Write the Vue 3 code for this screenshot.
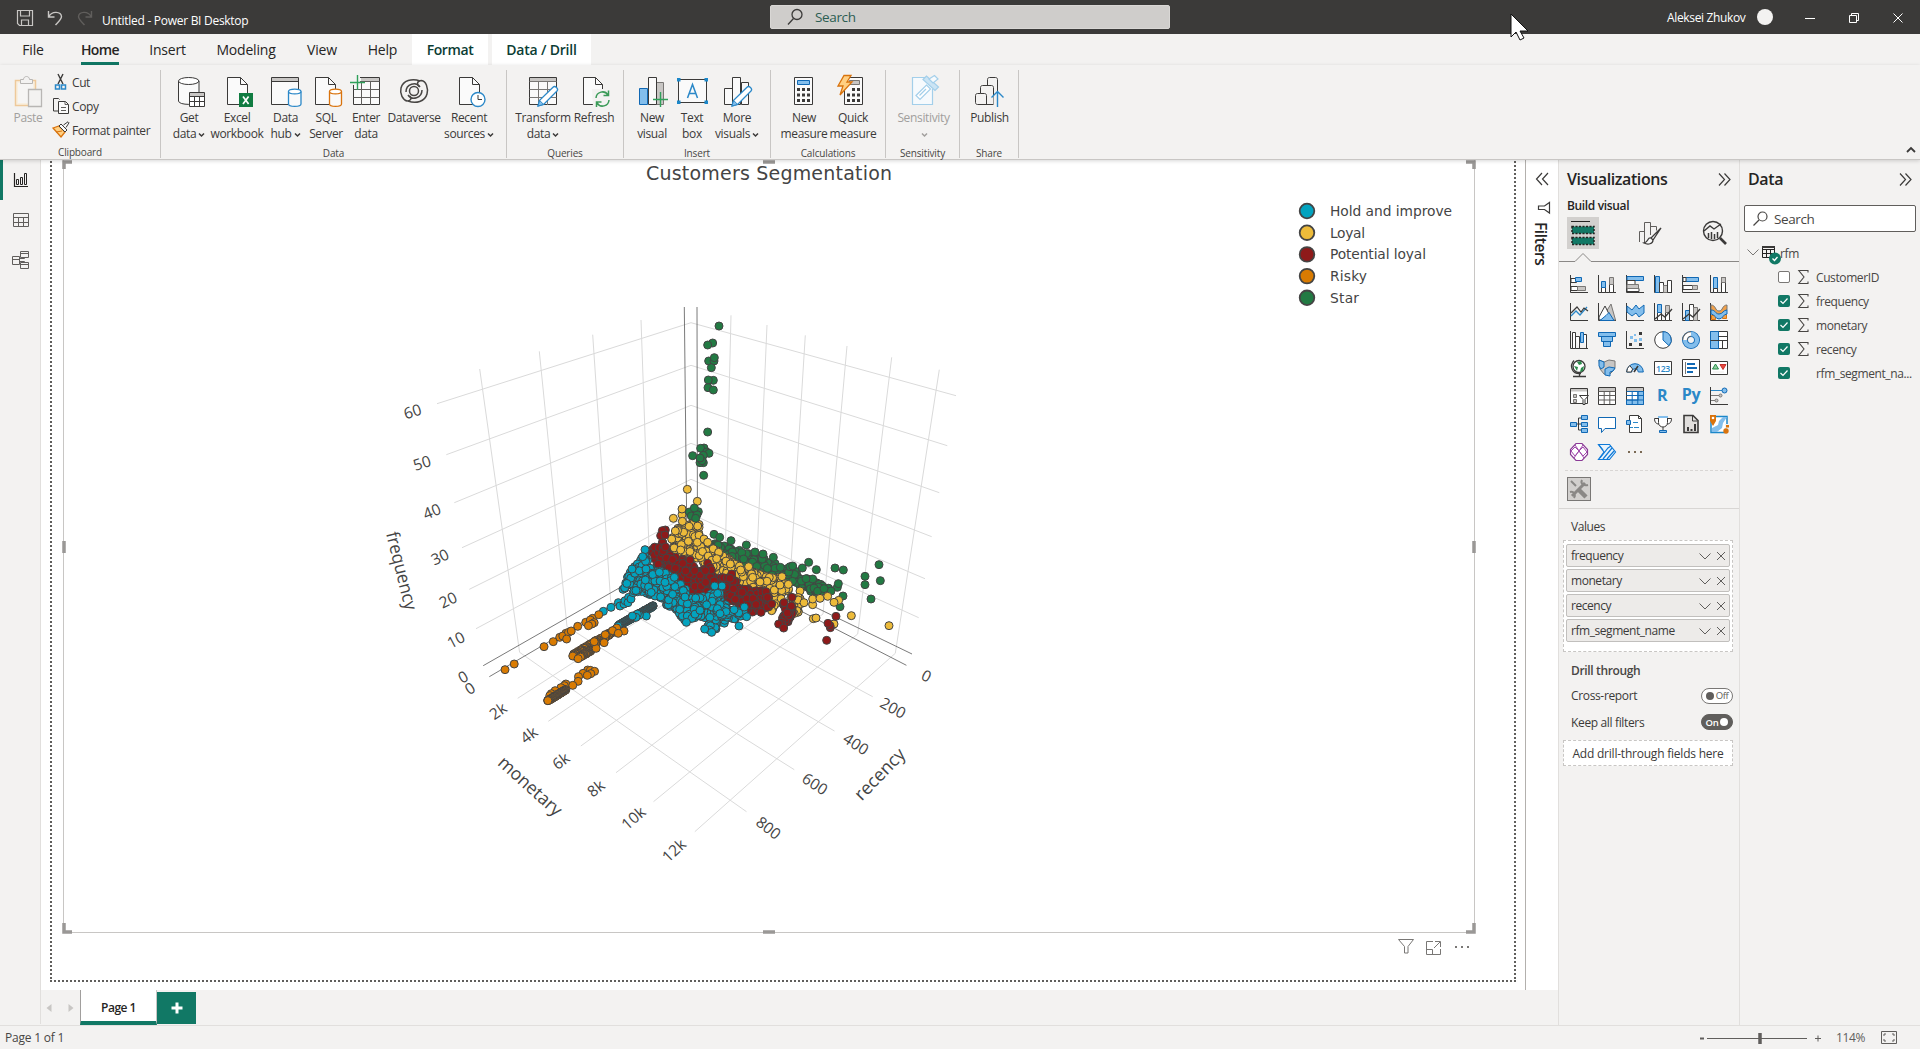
<script setup>
const K = '#3b3a39'
const B = '#2b88c8'
const docPath = (x, w = 20) =>
  `<path d="M${x}.5 2.5h${w - 8}l7 7v20h-${w - 1}z" fill="#fafafa" stroke="${K}"/><path d="M${x + w - 8}.5 2.5v7h7" fill="none" stroke="${K}"/>`
const cyl = (x, y, w, h, c) =>
  `<path d="M${x} ${y + 2.5}v${h - 5}c0 3.2 ${w} 3.2 ${w} 0v-${h - 5}" fill="#fafafa" stroke="${c}" stroke-width="1.3"/><ellipse cx="${x + w / 2}" cy="${y + 2.5}" rx="${w / 2}" ry="2.4" fill="#fff" stroke="${c}" stroke-width="1.3"/>`
const pencil = '<path d="M11 31l1.6-5.6L26 12.2c2-2 6 1.600 4 3.800L16.600 29.400z" fill="#fff" stroke="#2b88c8" stroke-width="1.3"/><path d="M11 31l1.600-5.600 4 4z" fill="#83beec" stroke="#2b88c8"/>'

const ribbonIcons = {
  get: `<path d="M5.500 6v20c0 4.500 20.500 4.500 20.500 0V6" fill="#fafafa" stroke="${K}"/><ellipse cx="15.700" cy="6" rx="10.200" ry="3.500" fill="#fff" stroke="${K}"/><path d="M16.500 17.500h15v14h-15z" fill="#fff" stroke="${K}"/><path d="M17 18h14v3H17z" fill="#c8c6c4"/><path d="M16.500 21.500h15M16.500 26.500h15M21.500 21.500v10M26.500 21.500v10" stroke="${K}" fill="none"/>`,
  excel: docPath(6, 21) + `<path d="M18 18h14v14H18z" fill="#107c41"/><path d="M22 21.500l5.600 7.500M27.600 21.500L22 29" stroke="#fff" stroke-width="1.700"/>`,
  hub: `<path d="M2.500 2.500h27v27h-27z" fill="#fafafa" stroke="${K}"/><path d="M3 3h26v3.500H3z" fill="#c8c6c4"/><path d="M2.500 6.500h27" stroke="${K}"/>` + cyl(19.500, 14, 12.500, 17.500, B),
  sql: docPath(5, 21) + cyl(19.500, 14, 12, 17.500, '#d9730d'),
  enter: `<path d="M3.500 2.500h26v27h-26z" fill="#fafafa" stroke="${K}"/><path d="M11 3h18v3.500H11z" fill="#c8c6c4"/><path d="M3.500 6.500h26M3.500 14.500h26M3.500 22.500h26M11.500 6v24M20.500 6v24" fill="none" stroke="#605e5c"/><path d="M0 0h10v10H0z" fill="#f3f2f1"/><path d="M7.500 0v15M0 7.500h15" stroke="#2fa05a" stroke-width="1.400"/>`,
  dataverse: `<g fill="none" stroke="#484644" stroke-width="1.500"><path d="M22 6c-8-3-17-.5-19 7-1.500 6 2 12 6 13 4 0 5-3 3-5"/><path d="M10 26c8 3 17 .5 19-7 1.500-6-1-13-5.500-13.500-4.500 0-5 4-2.500 6"/><circle cx="16" cy="16" r="4.500"/><path d="M8 17c0-8 10-11 14-5M24 15c0 8-10 11-14 5"/></g>`,
  recent: docPath(6, 21) + `<circle cx="25" cy="24.500" r="7" fill="#fff" stroke="${B}" stroke-width="1.400"/><path d="M25 20v4.500h4" fill="none" stroke="${K}"/>`,
  transform: `<path d="M2.500 2.500h27v27h-27z" fill="#fafafa" stroke="${K}"/><path d="M3 3h26v3.500H3z" fill="#c8c6c4"/><path d="M2.500 6.500h27M2.500 14.500h27M2.500 22.500h27M11.500 6v24M20.500 6v24" fill="none" stroke="#797775"/>` + pencil,
  refresh: docPath(5, 20) + `<path d="M14 14h18v18H15z" fill="#f3f2f1"/><path d="M18 23a6.500 6.500 0 0112-3M31 25a6.500 6.500 0 01-12 3M30.500 15.500v5h-5M18.500 32v-5h5" fill="none" stroke="#3a9a57" stroke-width="1.500"/>`,
  visual: `<path d="M3.500 13.500h8v16h-8z" fill="#83beec" stroke="#1068b4"/><path d="M20.500 7.500h7v22h-7z" fill="#c8c6c4" stroke="#797775"/><path d="M12.500 2.500h8v27h-8z" fill="#fafafa" stroke="${K}"/><path d="M24.500 17v15M17 24.500h15" stroke="#2fa05a" stroke-width="1.400"/>`,
  text: `<path d="M2.500 4.500h28v23h-28z" fill="#fafafa" stroke="${K}"/><path d="M1 3h3.500v3.500H1zM28.500 3H32v3.500h-3.500zM1 25.500h3.500V29H1zM28.500 25.500H32V29h-3.500z" fill="#1b87c9"/><path d="M11.500 23L16.500 9.500 21.500 23M13.200 18.500h6.600" fill="none" stroke="${B}" stroke-width="1.500"/>`,
  more: `<path d="M3.500 13.500h8v16h-8zM20.500 7.500h7v22h-7zM11.500 2.500h8v27h-8z" fill="#fafafa" stroke="${K}"/>` + pencil,
  calc: `<path d="M6.500 2.500h18v27h-18z" fill="#fafafa" stroke="${K}"/><path d="M9.500 5.500h12v4h-12z" fill="#83beec" stroke="#1068b4"/><path d="M9 13h3v3H9zM14 13h3v3h-3zM19 13h3v3h-3zM9 18.500h3v3H9zM14 18.500h3v3h-3zM19 18.500h3v3h-3zM9 24h3v3H9zM14 24h3v3h-3zM19 24h3v3h-3z" fill="${K}"/>`,
  quick: `<path d="M7.500 2.500h18v27h-18z" fill="#fafafa" stroke="${K}"/><path d="M12.500 5.500h10v4h-10z" fill="#c8c6c4" stroke="#797775"/><path d="M10 18.500h3v3h-3zM15 13h3v3h-3zM20 13h3v3h-3zM15 18.500h3v3h-3zM20 18.500h3v3h-3zM10 24h3v3h-3zM15 24h3v3h-3zM20 24h3v3h-3z" fill="${K}"/><path d="M7 .5h7L10 7h5L3 20l3-9H1z" fill="#ffd083" stroke="#d9730d" stroke-width="1.300"/>`,
  sens: `<g fill="none" stroke="#a3cfea" stroke-width="1.200"><path d="M18 2.500H5.500v27h20V14" fill="#f6fafd"/><path d="M9 20.500L19.500 10l4 4L13 24.500z" fill="#fff"/><path d="M12.500 20.500l6.500-6.500"/><path d="M16 4.500l3.500-3.500 12 11-3.500 3.500z" fill="#cbe4f4"/><path d="M22 4l5.500-3.500L31 4l-5 4z" fill="#f6fafd"/></g>`,
  publish: `<path d="M14.500 10.500v-6c0-1.200.8-2 2-2h6c1.200 0 2 .8 2 2v25h-20c-1.200 0-2-.8-2-2v-7c0-1.200.8-2 2-2h3v-6c0-1.200.8-2 2-2h9c1.200 0 2 .8 2 2v17M7.500 18.500h4c1.200 0 2 .8 2 2v9" fill="none" stroke="${K}"/><path d="M20.500 20h7v10h-7z" fill="#f3f2f1"/><path d="M24.500 32V16.500M18.500 22.500l6-6 6 6" fill="none" stroke="${B}" stroke-width="1.400"/>`
}

const groups = [
  { name: 'Data', w: 345, items: [
    ['get', 56, 'Get', 'data', 1], ['excel', 40, 'Excel', 'workbook'], ['hub', 57, 'Data', 'hub', 1], ['sql', 24, 'SQL', 'Server'],
    ['enter', 56, 'Enter', 'data'], ['dataverse', 40, 'Dataverse', ''], ['recent', 70, 'Recent', 'sources', 1]] },
  { name: 'Queries', w: 116, items: [['transform', 72, 'Transform', 'data', 1], ['refresh', 30, 'Refresh', '']] },
  { name: 'Insert', w: 146, items: [['visual', 56, 'New', 'visual'], ['text', 24, 'Text', 'box'], ['more', 66, 'More', 'visuals', 1]] },
  { name: 'Calculations', w: 114, items: [['calc', 66, 'New', 'measure'], ['quick', 32, 'Quick', 'measure']] },
  { name: 'Sensitivity', w: 73, items: [['sens', 75, 'Sensitivity', '', 1]], off: true },
  { name: 'Share', w: 58, items: [['publish', 59, 'Publish', '']] }
]
const tabs = [
  ['File', 66], ['Home', 68], ['Insert', 67], ['Modeling', 90], ['View', 62], ['Help', 59], ['Format', 76], ['Data / Drill', 99]
]

/* visual gallery, 18px glyphs */
const ax = `<path d="M.5 0v17.500H18" fill="none" stroke="${K}"/>`
const bl = 'fill="#83beec" stroke="#1068b4"'
const gr = 'fill="#c8c6c4" stroke="#797775"'
const wh = `fill="#fff" stroke="${K}"`
const none = 'fill="none"'
const gallery = [
  ax + `<path d="M1 3.500h5.500v4H1zM1 11.500h7.500v4H1z" ${wh}/><path d="M5.500 2.500h6v4h-6z" ${bl}/><path d="M7.500 11.500h8v4h-8z" ${gr}/>`,
  ax + `<path d="M3.500 12.500h4v5h-4zM11.500 8.500h4v9h-4z" ${wh}/><path d="M3.500 6.500h4v6h-4z" ${bl}/><path d="M11.500 2.500h4v7h-4z" ${gr}/>`,
  ax + `<path d="M1 1.500h16.500v4H1z" ${bl}/><path d="M1 5.500h8v4H1zM1 13.500h12v3H1z" ${wh}/><path d="M1 9.500h11.500v4H1z" ${gr}/>`,
  ax + `<path d="M1.500 1.500h4v16h-4z" ${bl}/><path d="M5.500 7.500h4v10h-4z" ${wh}/><path d="M9.500 10.500h4v7h-4z" ${gr}/><path d="M13.500 5.500h4v12h-4z" ${wh}/>`,
  ax + `<path d="M1 2.500h15.500v4H1z" ${bl}/><path d="M1 2.500h3v4H1zM1 10.500h10v4H1z" ${wh}/><path d="M10.500 10.500h5v4h-5z" ${gr}/>`,
  ax + `<path d="M3.500 2.500h4v15h-4z" ${bl}/><path d="M3.500 13.500h4v4h-4zM11.500 2.500h4v15h-4z" ${wh}/><path d="M11.500 2.500h4v5h-4z" ${gr}/>`,
  ax + `<path d="M1 13l5-5 4 4 7-8" ${none} stroke="#2b88c8" stroke-width="1.300"/><path d="M1 10l6-6 4 5 3-4 4 3" ${none} stroke="${K}" stroke-width="1.200"/>`,
  ax + `<path d="M8 17V9l5-8 4.500 16z" ${gr}/><path d="M1 14l6-11 6 12-2 2H1z" ${wh}/><path d="M2 17.500l6-5 3-3 5 8z" ${bl}/>`,
  ax + `<path d="M1 3l5 4 4-5 3 4 5-4v8l-5 4-3-4-4 3-5-4z" ${bl}/>`,
  ax + `<path d="M3.500 9.500h4v8h-4zM11.500 9.500h4v8h-4z" ${wh}/><path d="M3.500 1.500h4v8h-4z" ${bl}/><path d="M11.500 2.500h4v7h-4z" ${gr}/><path d="M1 16l6-5 4 3 7-8" ${none} stroke="${K}" stroke-width="1.300"/>`,
  ax + `<path d="M3.500 7.500h4v10h-4z" ${bl}/><path d="M7.500 1.500h4v16h-4z" ${wh}/><path d="M11.500 4.500h4v13h-4z" ${gr}/><path d="M1 16l6-5 4 3 7-8" ${none} stroke="${K}" stroke-width="1.300"/>`,
  ax + `<path d="M1.500 12.500h4v4h-4zM12.500 11.500h4v4h-4z" fill="#f2a14a" stroke="#d9730d"/><path d="M1 2c5 0 4 6 8 6s3-6 8-6v5c-4 0-4 8-8 8S5 8 1 8z" fill="#f2a14a" stroke="#797775"/><path d="M1 7c5 0 4 4 8 4s4-4 8-4v4c-4 0-4 5-8 5s-4-5-8-5z" ${bl}/>`,
  ax + `<path d="M2.500 1.500h3v16h-3zM5.500 5.500h4v12M12.500 3.500h4v14M9.500 8.500h3" ${wh}/><path d="M10.500 1.500h3v10h-3z" ${bl}/>`,
  `<path d="M.5 1.500h17v4H.5zM3.500 5.500h11v5h-11zM5.500 10.500h7v5h-7z" ${bl}/>`,
  ax + `<path d="M13 1h3v3h-3zM3 12h3v3H3zM13 12h3v3h-3z" fill="${K}"/><path d="M4 5h3v3H4zM8 8h3v3H8zM13 7h3v3h-3zM8 3h2v2H8z" fill="#83beec"/>`,
  `<circle cx="9" cy="9" r="8.300" ${wh}/><path d="M9 .7a8.300 8.300 0 016 14L9 9z" ${bl}/>`,
  `<circle cx="9" cy="9" r="6" fill="none" stroke="#1068b4" stroke-width="6"/><circle cx="9" cy="9" r="6" fill="none" stroke="#83beec" stroke-width="4.300"/><path d="M9 3A6 6 0 003 9" fill="none" stroke="#605e5c" stroke-width="5.500"/><path d="M9 3A6 6 0 003 9" fill="none" stroke="#fff" stroke-width="3.500"/>`,
  `<path d="M.5.5h17v17H.5z" ${wh}/><path d="M.5.5h8v17h-8z" ${bl}/><path d="M.5 9.500h17M8.500 5.500h9M12.500 9.500v8" ${none} stroke="${K}"/>`,
  `<circle cx="9" cy="7.500" r="6" fill="#fff" stroke="${K}" stroke-width="1.300"/><path d="M7 3l4-1 1 3-3 1zM4 7l4 1-1 4zM11 9l3-2-1 5-3 1z" fill="#2a8c4b"/><path d="M4 1.500C-1 7 2 15.500 11 14.500M3 17.500h13M9.500 15v2" ${none} stroke="${K}" stroke-width="1.300"/>`,
  `<path d="M1 1l5 2 5-2 6 1v7l-2 3-4 4-5-1-4-5z" fill="#c8c6c4" stroke="#797775"/><path d="M1 1l5 2v5l-3 2-2-3zM7 10l4-2 6 1-2 3-3 1v4l-5-1z" ${bl}/>`,
  `<path d="M.7 13a8.300 8.300 0 0116.600 0h-5a3.300 3.300 0 00-6.600 0z" ${bl}/><path d="M.7 13a8.300 8.300 0 013-6.400l3 3.500a4 4 0 00-1.200 2.900z" ${wh}/><path d="M8 13l4-6" stroke="${K}" stroke-width="1.600"/>`,
  `<path d="M.5 2.500h17v13H.5z" ${wh}/><text x="9" y="12.500" text-anchor="middle" font-size="9.500" font-weight="600" textLength="14" lengthAdjust="spacingAndGlyphs" font-family="Open Sans, sans-serif" fill="#2b88c8">123</text>`,
  `<path d="M.5.500h17v17H.5z" ${wh}/><path d="M3.500 3v12" stroke="#797775"/><path d="M5 4h8v2H5zM5 8h10v2H5zM5 12h6v2H5z" fill="#1068b4"/>`,
  `<path d="M.5 2.500h17v13H.5z" ${wh}/><path d="M2.500 10l3-5 3 5z" fill="#8fcf9f" stroke="#2a8c4b"/><path d="M10 5.500h6l-3 5z" fill="#e8483f" stroke="#c4302b"/><path d="M3 13h11" stroke="#edebe9"/>`,
  `<path d="M.5 1.500h17v15H.5z" ${wh}/><path d="M1 2h16v2.500H1z" fill="#c8c6c4"/><path d="M3.500 7.500h3v3h-3zM3.500 12.500h3v3h-3z" ${gr}/><path d="M9.500 8.500h9l-3.500 4v5h-2v-5z" ${wh}/>`,
  `<path d="M.5.500h17v17H.5z" ${wh}/><path d="M1 1h16v3H1z" fill="#c8c6c4"/><path d="M.5 4.500h17M.5 8.500h17M.5 13h17M6.200 4v13M11.800 4v13" ${none} stroke="#605e5c"/>`,
  `<path d="M.5.500h17v17H.5z" ${wh}/><path d="M1 1h16v3H1z" fill="#c8c6c4"/><path d="M12 4.500h5.500v13H.5V13H12z" ${bl}/><path d="M.5 4.500h17M.5 8.500h17M.5 13h17M6.200 4v13M11.800 4v13" ${none} stroke="#1068b4"/>`,
  `<text x="8" y="14" text-anchor="middle" font-size="16" font-weight="700" font-family="Open Sans, sans-serif" fill="#2b88c8">R</text>`,
  `<text x="9" y="13" text-anchor="middle" font-size="15.500" font-weight="700" textLength="18.500" lengthAdjust="spacingAndGlyphs" font-family="Open Sans, sans-serif" fill="#2b88c8">Py</text>`,
  ax + `<path d="M1 3.500h12" stroke="#2b88c8"/><circle cx="14.500" cy="3.500" r="2.500" ${bl}/><path d="M1 8.500h8M1 13.500h4" stroke="#797775"/><circle cx="10.500" cy="8.500" r="1.500" ${gr}/><circle cx="6.500" cy="13.500" r="1.500" ${gr}/>`,
  `<path d="M6 9h5M8.500 3v12M8.500 3H12M8.500 15H12" ${none} stroke="${K}"/><path d="M.5 7.500h6v4h-6zM11.500 .5h6v4h-6zM11.500 7.500h6v4h-6zM11.500 13.500h6v4h-6z" ${bl}/>`,
  `<path d="M.5 2.500h17v11H7l-3.500 4v-4h-3z" fill="#fff" stroke="#1068b4"/>`,
  `<path d="M3.500.500h9l3 3v14h-12z" ${wh}/><path d="M12.500.500v3h3" ${none} stroke="${K}"/><path d="M.5 5.500h4v4h-4z" ${bl}/><path d="M7 7.500h5M4 12.500h3M8 12.500h5" stroke="#2b88c8"/>`,
  `<path d="M4.500 1.500h9v6c0 6-9 6-9 0zM4.500 3.500h-4c0 4 2 5.500 4.500 5.500M13.500 3.500h4c0 4-2 5.500-4.500 5.500M9 12v3" ${wh}/><path d="M4 1h10v2H4z" fill="#83beec"/><path d="M5.500 15.500h7v2h-7z" ${bl}/>`,
  `<path d="M2 .500h9l5 5v12H2z" fill="#e1dfdd" stroke="${K}" stroke-width="1.600"/><path d="M5 12h2v4H5zM8.500 14h2v2h-2zM12 9h2v7h-2z" fill="${K}"/><path d="M10.500 1v5H15" ${none} stroke="${K}"/>`,
  `<path d="M1 1.500h16v16H1z" fill="#fff" stroke="#1b87c9" stroke-width="1.500"/><path d="M2 17v-4l6-3 1-4 4-4h4l-4 6-1 5-5 4z" fill="#83beec"/><path d="M0 0h6v6l-3 5-3-5z" fill="#d9730d"/><circle cx="3" cy="3" r="1.300" fill="#fff"/><path d="M15 9h4v10h-4z" fill="#f3f2f1"/><circle cx="16" cy="16" r="2.700" fill="#d9730d"/><path d="M16 10h3v2.500h-3z" fill="#d9730d"/>`,
  `<path d="M6 .5h6l5.500 6v5l-5.500 6H6l-5.500-6v-5z" fill="#fff" stroke="#8a3a96" stroke-width="1.200"/><path d="M5 2l9 13M13 2L4 15M1 8l4-4 4 4-4 5zM9 8l4-4 4 5-4 4z" ${none} stroke="#a04bab"/>`,
  `<path d="M.5 1.500h11l6 7.500-6 7.500H.5L6 9z" fill="#eaf4fc" stroke="#0f7ad8" stroke-width="1.200"/><path d="M2 15l8-10 3-2M5 16l9-11M9 16l7-8M1 2l4 5" ${none} stroke="#0f7ad8" stroke-width="1.200"/>`,
  `<path d="M2 8h2v2H2zM8 8h2v2H8zM14 8h2v2h-2z" fill="#7a6a55"/>`
]

/* 3D scatter */
const walls = [
  [437, 403.7, 691, 322.7], [446.3, 454.7, 691, 365.300], [454.3, 502.7, 691, 405.3], [462, 547.7, 691, 443.3], [469.3, 589.3, 691, 479.3], [476, 628.7, 691, 514],
  [691, 322.7, 956, 395.7], [691, 365.3, 947.3, 445.7], [691, 405.3, 939.3, 492.7], [691, 443.3, 931.7, 536.7], [691, 479.3, 925, 578.7], [691, 514, 918.7, 617.7],
  [479.7, 369, 519.6, 652.3], [539.3, 351.3, 567, 626.7], [592.7, 334.7, 610.7, 601.7], [641, 320, 650, 577],
  [731, 315.3, 725, 565], [767, 325, 756, 580], [805.3, 335.3, 789, 596], [847, 346, 823, 614], [891.7, 357.3, 857.7, 634], [939.3, 369.7, 895.3, 653.3],
  [517.7, 698.3, 725, 565], [548.3, 721.3, 756, 580], [580.8, 746, 789, 596], [616, 772.7, 823, 614], [653.5, 801.7, 857.7, 634], [694.8, 831.7, 895.3, 653.3],
  [872.7, 696.7, 650, 577], [834.5, 731, 610.7, 601.7], [794.3, 769.7, 567, 626.7], [746.5, 811.7, 519.6, 652.3]
]
const zeroLines = [
  [483.2, 665.7, 691, 547], [691, 547, 912, 654], [489.3, 676.7, 697, 555], [906.4, 665.3, 688, 553], [684.3, 307, 687, 550], [697, 307, 697.5, 550]
]
const ticks = [
  ['60', 412.5, 411.5, -18], ['50', 422, 463, -18], ['40', 432, 511.500, -22], ['30', 440, 557, -25], ['20', 448, 600, -26], ['10', 456, 640, -28],
  ['0', 463, 677, -30], ['0', 470, 688.500, -33], ['2k', 498, 711, -35], ['4k', 529, 735, -37], ['6k', 561, 761, -37], ['8k', 596, 788.5, -39], ['10k', 633.5, 818, -41], ['12k', 674, 850.5, -43],
  ['0', 926.5, 676, 26], ['200', 893, 708, 29], ['400', 856, 744, 33], ['600', 815, 784, 33], ['800', 768.5, 828, 38]
]
const axisNames = [['frequency', 400.5, 571, 76, 80], ['monetary', 529.5, 787, 42, 79], ['recency', 880.5, 775, -46, 64]]
const legend = [['Hold and improve', '#03a3bf', 122], ['Loyal', '#edbb3a', 35], ['Potential loyal', '#8e1a1a', 96], ['Risky', '#d97b02', 37], ['Star', '#227a43', 29]]

let seed = 7
const rnd = () => {
  seed = (seed * 16807) % 2147483647
  return seed / 2147483647
}
const inside = (x, y, p) => {
  let c = false
  for (let i = 0, j = p.length - 1; i < p.length; j = i++) {
    if (p[i][1] > y !== p[j][1] > y && x < ((p[j][0] - p[i][0]) * (y - p[i][1])) / (p[j][1] - p[i][1]) + p[i][0]) c = !c
  }
  return c
}
const T = (x, y) => [550 + x / 3, 480 + y / 3]
const U = (x, y) => [360 + x * 0.38265, 600 + y / 3]
const V = (x, y) => [640 + x / 3, 290 + y / 3]
const cloud = (color, poly, n) => {
  const xs = poly.map(p => p[0]), ys = poly.map(p => p[1])
  const out = []
  const x0 = Math.min(...xs), x1 = Math.max(...xs), y0 = Math.min(...ys), y1 = Math.max(...ys)
  while (out.length < n) {
    const x = x0 + rnd() * (x1 - x0), y = y0 + rnd() * (y1 - y0)
    if (inside(x, y, poly)) out.push([...T(x, y), color])
  }
  return out
}
const list = (color, f, pts) => pts.map(p => [...f(...p), color])
const tube = (color, f, a, b, n, spread) =>
  Array.from({ length: n }, (_, i) => {
    const t = 1 - i / (n - 1)
    const [x, y] = f(a[0] + (b[0] - a[0]) * t, a[1] + (b[1] - a[1]) * t)
    return [x + (rnd() - 0.5) * spread, y + (rnd() - 0.5) * spread, color]
  })
const [TEAL, GOLD, RED, ORANGE, GREEN] = legend.map(l => l[1])

const dots = [
  ...list(GREEN, V, [[237, 108], [218, 159], [203, 165], [206, 213], [222, 213], [223, 203], [214, 233], [220, 271], [205, 270], [204, 293], [220, 300], [203, 426], [192, 474], [182, 475], [200, 486], [207, 490], [158, 497], [190, 496], [190, 518], [180, 518], [186, 512], [180, 504], [191, 556]]),
  ...cloud(GREEN, [[462, 200], [500, 190], [543, 198], [600, 222], [665, 240], [690, 262], [735, 265], [745, 290], [795, 300], [830, 325], [852, 322], [845, 335], [790, 340], [735, 315], [700, 300], [640, 290], [560, 245]], 230),
  ...list(GREEN, T, [[492, 163], [509, 172], [543, 182], [589, 195], [615, 216], [639, 222], [670, 232], [691, 262], [720, 260], [728, 258], [757, 264], [776, 247], [799, 269], [788, 297], [768, 296], [855, 264], [880, 270], [945, 289], [945, 314], [991, 302], [987, 254], [963, 357], [862, 322], [865, 311], [870, 380], [879, 348], [843, 333], [822, 326]]),
  ...list(GOLD, T, [[412, 28], [442, 64], [396, 104], [396, 87], [370, 115]]),
  ...cloud(GOLD, [[388, 135], [420, 125], [447, 130], [449, 172], [480, 200], [520, 222], [560, 255], [640, 285], [695, 295], [715, 320], [718, 345], [680, 370], [665, 392], [600, 325], [520, 285], [440, 245], [372, 218], [360, 185]], 360),
  ...list(GOLD, T, [[397, 124], [376, 153], [415, 184], [442, 187], [462, 177], [473, 187], [392, 210], [506, 217], [500, 236], [541, 252], [596, 260], [572, 270], [608, 292], [696, 290], [715, 313], [690, 315], [665, 392], [750, 333]]),
  ...cloud(GOLD, [[718, 350], [750, 352], [765, 366], [750, 385], [738, 410], [722, 395]], 22),
  ...list(GOLD, T, [[762, 368], [788, 374], [788, 357], [810, 355], [833, 349], [866, 361], [852, 367], [790, 416], [798, 414], [904, 407], [1017, 437], [852, 432]]),
  ...list(GREEN, T, [[418, 96], [424, 108], [445, 95], [441, 104], [437, 115], [433, 84]]),
  ...cloud(RED, [[303, 212], [325, 190], [348, 182], [355, 225], [400, 238], [440, 265], [475, 268], [500, 292], [545, 290], [580, 325], [650, 335], [665, 375], [640, 392], [605, 402], [560, 370], [500, 350], [420, 330], [370, 285], [320, 250]], 480),
  ...list(RED, T, [[346, 150], [337, 152], [332, 167], [345, 165], [420, 240], [473, 250], [480, 262], [484, 270], [434, 272], [466, 272], [467, 307], [545, 282], [540, 295], [648, 335], [665, 372], [652, 352], [633, 397]]),
  ...cloud(RED, [[697, 368], [728, 382], [728, 400], [710, 440], [692, 436], [700, 400]], 60),
  ...list(RED, T, [[702, 368], [724, 378], [686, 432], [701, 444], [726, 352], [858, 409], [841, 443], [840, 437], [834, 430], [830, 481]]),
  ...tube(TEAL, T, [205, 437], [310, 378], 170, 0.8),
  ...list(TEAL, T, [[289, 408], [268, 405], [262, 402], [258, 412], [247, 408], [160, 394], [183, 382], [205, 368], [210, 378], [222, 372], [225, 362], [236, 352], [234, 368], [243, 357], [219, 328]]),
  ...cloud(TEAL, [[283, 218], [298, 240], [292, 262], [330, 272], [375, 292], [408, 325], [418, 350], [455, 350], [490, 338], [512, 335], [515, 360], [545, 390], [585, 392], [585, 410], [530, 425], [488, 455], [465, 445], [485, 415], [440, 412], [405, 422], [370, 385], [330, 365], [300, 345], [240, 338], [222, 325], [228, 290], [248, 268], [268, 240]], 470),
  ...list(TEAL, T, [[285, 209], [278, 230], [246, 267], [288, 267], [286, 300], [328, 277], [345, 307], [373, 292], [400, 332], [405, 351], [437, 354], [450, 391], [516, 318], [494, 318], [503, 340], [510, 401], [552, 389], [583, 381], [590, 410], [567, 438], [485, 457], [409, 427], [464, 447]]),
  ...list(ORANGE, U, [[403, 192], [379, 209], [481, 140], [505, 125], [522, 112], [538, 100], [530, 108], [545, 97], [540, 117], [552, 93], [569, 79], [590, 67], [608, 55], [602, 60], [612, 68], [606, 72], [597, 77], [624, 44]]),
  ...tube(ORANGE, U, [556, 166], [670, 90], 110, 2.2),
  ...tube(ORANGE, U, [575, 170], [605, 150], 30, 1.2),
  ...list(ORANGE, U, [[671, 84], [660, 92], [690, 93], [675, 100], [641, 104], [638, 128], [617, 145], [612, 125], [556, 168], [570, 176]]),
  ...list(ORANGE, U, [[595, 210], [602, 211], [613, 214], [603, 221], [583, 220], [571, 230], [594, 226], [570, 244], [538, 252], [534, 257], [556, 256], [525, 263], [510, 272], [500, 281], [496, 287]]),
  ...tube(ORANGE, U, [491, 302], [538, 269], 80, 0.6),
  ...list(ORANGE, U, [[491, 302]])
]

const fields = [['CustomerID', 0, 1], ['frequency', 1, 1], ['monetary', 1, 1], ['recency', 1, 1], ['rfm_segment_na...', 1, 0]]
const values = ['frequency', 'monetary', 'recency', 'rfm_segment_name']
</script>

<template>
  <div class="app">
    <header class="title">
      <svg class="ti" width="120" height="34" fill="none" stroke="#c8c6c4">
        <path d="M17.500 10.500h15v15h-13l-2-2z M20.500 11v5h9v-5M21.500 25v-5h7v5" stroke-width="1.200" />
        <path d="M48.500 11v6h6M49 16.500c3-6 12-5 12.500 0 0 3-3 5-6 8.500" stroke-width="1.400" />
        <path d="M91.500 11v6h-6M91 16.500c-3-6-12-5-12.500 0 0 3 3 5 6 8.500" stroke="#605e5c" stroke-width="1.400" />
      </svg>
      <span class="doc">Untitled - Power BI Desktop</span>
      <div class="gsearch">
        <svg width="16" height="18" fill="none" stroke="#3b3a39" stroke-width="1.300"><circle cx="10" cy="6.500" r="5" /><path d="M6.500 10.500L1 16.500" /></svg>
        <span>Search</span>
      </div>
      <span class="user">Aleksei Zhukov</span>
      <i class="avatar"></i>
      <svg class="win" width="120" height="34" fill="none" stroke="#fff">
        <path d="M9 18.500h10M53.500 15.500h7v7h-7zM55.500 15v-1.500h7v7H61M97.500 13.500l9 9M106.500 13.500l-9 9" />
      </svg>
    </header>

    <nav class="tabs">
      <span v-for="(t, i) in tabs" :key="t[0]" class="tab" :class="{ active: i === 1, ctx: i > 5 }" :style="{ width: t[1] + 'px' }"><b>{{ t[0] }}</b></span>
    </nav>

    <div class="ribbon">
      <section class="clip">
        <div class="paste">
          <svg width="32" height="32" fill="none">
            <path d="M3.500 5.500h20v25h-20z" fill="#f9efdf" stroke="#eec99a" stroke-width="1.500" /><path d="M6 8h15v20H6z" fill="#f6f5f4" />
            <path d="M8.500 8.500v-4h3c0-4 6-4 6 0h3v4z" fill="#f3f2f1" stroke="#b8b6b4" /><path d="M16.500 14.500h13v17h-13z" fill="#f3f2f1" stroke="#b8b6b4" stroke-width="1.300" />
          </svg>
          <span>Paste</span>
        </div>
        <div class="small">
          <div><svg width="18" height="18" fill="none"><path d="M6 1l5 10M11 1L6 11" stroke="#3b3a39" stroke-width="1.400" /><path d="M3.500 12h4v4h-4zM9.500 12h4v4h-4z" stroke="#2b88c8" stroke-width="1.500" /></svg>Cut</div>
          <div><svg width="18" height="18" fill="none" stroke="#3b3a39"><path d="M6 14H1.500V1.500h5l1 1" /><path d="M6.500 4.500h7l3 3v9h-10z" fill="#fafafa" /><path d="M13 4.500v3h3.500M9 10.500h5M9 13.500h5" stroke="#605e5c" /></svg>Copy</div>
          <div><svg width="18" height="18" fill="none"><path d="M1 7l6-2 6 6-4 5z" fill="#ffd083" stroke="#d9730d" stroke-width="1.300" /><path d="M7 5l2-2 6 6-2 2zM11.500 4L16 .8l1 1L14 6.500" fill="#fafafa" stroke="#3b3a39" /><path d="M4 11l6-1" stroke="#d9730d" /></svg>Format painter</div>
        </div>
        <label>Clipboard</label>
      </section>
      <section v-for="g in groups" :key="g.name" :style="{ width: g.w + 'px' }" :class="{ off: g.off }">
        <div class="btns">
          <div v-for="b in g.items" :key="b[0]" class="btn" :style="{ width: b[1] + 'px' }">
            <svg width="33" height="33" viewBox="0 0 33 33" v-html="ribbonIcons[b[0]]"></svg>
            <span>{{ b[2] }}</span>
            <span>{{ b[3] }}<svg v-if="b[4]" class="chev" width="7" height="6" fill="none" stroke="currentColor" stroke-width="1.500"><path d="M1 1.500L3.500 4 6 1.500" /></svg></span>
          </div>
        </div>
        <label>{{ g.name }}</label>
      </section>
      <svg class="collapse" width="10" height="7" fill="none" stroke="#3b3a39" stroke-width="1.800"><path d="M1 6l4-4 4 4" /></svg>
    </div>

    <main class="body">
      <div class="work">
        <div class="upper">
          <aside class="rail">
            <svg width="41" height="120" fill="none" stroke="#605e5c">
              <path d="M14.500 13v13.500H28" stroke="#252423" stroke-width="1.200" /><path d="M16.500 19.500h2v5h-2zM20.500 17.500h2v7h-2zM24.500 13.500h2v11h-2z" stroke="#252423" />
              <path d="M13.500 53.500h15v13h-15zM13.500 57.500h15M13.500 62.500h15M18.500 57v9M23.500 57v9" />
              <path d="M20.500 91.500h8v6h-8zM20.500 102.500h8v6h-8zM12.500 96.500h7v8h-7zM12.500 99.500h7M20.500 93.500h8M20.500 104.500h8M19.500 98.500h5v-1M19.500 101.500h5v1" />
            </svg>
          </aside>
          <div class="canvas">
            <div class="page">
              <svg class="chart" width="1415" height="778" viewBox="62 158 1415 778">
                <path d="M63.500 160V932.500H1474.500V160" fill="none" stroke="#c8c6c4" />
                <path d="M64 169v-7h8M1474 169v-7h-8M64 923v9h8M1474 923v9h-8M763 162h12M763 932h12M64 541v12M1474 541v12" fill="none" stroke="#9a9896" stroke-width="3.500" />
                <text class="vd" x="769" y="179.500" text-anchor="middle" font-size="19" textLength="246">Customers Segmentation</text>
                <path v-for="(l, i) in walls" :key="'w' + i" :d="`M${l[0]} ${l[1]}L${l[2]} ${l[3]}`" stroke="#dadada" fill="none" />
                <path v-for="(l, i) in zeroLines" :key="'z' + i" :d="`M${l[0]} ${l[1]}L${l[2]} ${l[3]}`" stroke="#6b6b6b" stroke-width=".9" fill="none" />
                <circle v-for="(d, i) in dots" :key="'d' + i" :cx="d[0]" :cy="d[1]" r="4" :fill="d[2]" stroke="#444" stroke-width="1" />
                <text v-for="(t, i) in ticks" :key="'t' + i" class="os" text-anchor="middle" font-size="15.500" :transform="`translate(${t[1]} ${t[2]}) rotate(${t[3]})`" y="5.500">{{ t[0] }}</text>
                <text v-for="t in axisNames" :key="t[0]" class="os" text-anchor="middle" font-size="18" :textLength="t[4]" lengthAdjust="spacingAndGlyphs" :transform="`translate(${t[1]} ${t[2]}) rotate(${t[3]})`" y="5">{{ t[0] }}</text>
                <g v-for="(l, i) in legend" :key="l[0]">
                  <circle cx="1307" :cy="211 + i * 21.700" r="7.300" :fill="l[1]" stroke="#444" stroke-width="1.800" />
                  <text class="vd" x="1330" :y="216 + i * 21.700" font-size="13.800" :textLength="l[2]">{{ l[0] }}</text>
                </g>
              </svg>
              <svg class="actions" width="76" height="20" fill="none" stroke="#797775">
                <path d="M1.500 2.500h15l-5.500 7v6.500H7.500V9.500z" /><path d="M36 4.500h-6.500v13h14V12M38 4.500h5.500V10M43 5l-6 6M29.500 12.500h6v5" /><path d="M58 9h2v2h-2zM64 9h2v2h-2zM70 9h2v2h-2z" fill="#797775" stroke="none" />
              </svg>
            </div>
          </div>
          <aside class="filters">
            <svg width="32" height="60" fill="none" stroke="#3b3a39" stroke-width="1.200"><path d="M16 13l-5.500 6 5.500 6M22 13l-5.500 6 5.500 6M23.500 42.500v10.500l-5-3.500h-6v-3.500h6z" /></svg>
            <span>Filters</span>
          </aside>
        </div>
        <footer class="pages">
          <svg width="40" height="34" fill="#c8c6c4"><path d="M10.500 14v8l-5-4zM27.500 14v8l5-4z" /></svg>
          <span class="pg">Page 1</span>
          <span class="add"><svg width="12" height="12"><path d="M6 .5v11M.5 6h11" stroke="#fff" stroke-width="3" /></svg></span>
        </footer>
      </div>

      <aside class="viz">
        <div class="head"><h2>Visualizations</h2><svg width="13" height="13" fill="none" stroke="#3b3a39" stroke-width="1.200"><path d="M1 .5l5.500 6L1 12.500M6.500.5l5.500 6-5.500 6" /></svg></div>
        <h3>Build visual</h3>
        <div class="modes">
          <span class="sel"><svg width="32" height="32"><path d="M4 4.500h19" stroke="#252423" /><path d="M5 9.500h22v7H5zM5 20.500h22v7H5z" fill="#117865" stroke="#252423" stroke-dasharray="2 1.500" stroke-width="1.500" /></svg></span>
          <svg class="m2" width="24" height="24" fill="none" stroke="#605e5c"><path d="M1.500 21V10.500h5V22M6.500 14V1.500h6V14M12.500 5.500h6v4" /><path d="M23 7L13 17l2 2zM13 17c-4-1-2 4-7 5 4 2 9 1 9-3" fill="#fafafa" stroke="#3b3a39" stroke-width="1.300" /></svg>
          <svg width="26" height="26" fill="none" stroke="#3b3a39" stroke-width="1.400"><circle cx="11" cy="11" r="9.500" /><path d="M2 11l6-5 4 3 7-5" /><path d="M6.500 18v-5M9.500 19v-7M12.500 19v-5M15.500 18v-6" stroke-width="1.500" /><path d="M18 18l6 6" stroke-width="2.600" /></svg>
        </div>
        <svg class="notch" width="180" height="10" fill="none" stroke="#8a8886"><path d="M0 9.500h16l8-8 8 8h148" /></svg>
        <div class="gallery">
          <span v-for="(g, i) in gallery" :key="i"><svg width="19" height="19" viewBox="0 0 19 19" v-html="g"></svg></span>
        </div>
        <div class="custom"><span><svg width="22" height="22" fill="none" stroke="#8a8886" stroke-width="3"><path d="M3 3l5 5" stroke-width="2" /><path d="M11 12l7 7" stroke-width="4.500" /><path d="M4 18L17 5" /><path d="M14 2c-2 4 2 6 6 5M2 14c4-1 6 3 4 6" stroke-width="2" /></svg></span></div>
        <div class="wells">
          <p>Values</p>
          <div class="well">
            <div v-for="v in values" :key="v" class="pill"><span>{{ v }}</span>
              <svg width="28" height="12" fill="none" stroke="#605e5c"><path d="M.5 3.500l5.500 5.500 5.500-5.500M18 2l8 8M26 2l-8 8" /></svg>
            </div>
          </div>
          <p class="dt">Drill through</p>
          <div class="row r1"><span>Cross-report</span><em class="tg"><i></i>Off</em></div>
          <div class="row r2"><span>Keep all filters</span><em class="tg on">On<i></i></em></div>
          <div class="drop">Add drill-through fields here</div>
        </div>
      </aside>

      <aside class="data">
        <div class="head"><h2>Data</h2><svg width="13" height="13" fill="none" stroke="#3b3a39" stroke-width="1.200"><path d="M1 .5l5.500 6L1 12.500M6.500.5l5.500 6-5.500 6" /></svg></div>
        <div class="dsearch"><svg width="15" height="15" fill="none" stroke="#484644" stroke-width="1.200"><circle cx="9.500" cy="5.500" r="4.500" /><path d="M6 9L.5 14.500" /></svg>Search</div>
        <div class="tbl">
          <svg width="33" height="24" fill="none"><path d="M.5 8.500l5.500 5.500 5.500-5.500" stroke="#797775" /><path d="M15.500 5.500h12v11h-12zM15.500 8.500h12M15.500 12.500h12M19.500 8v8M23.500 8v8" stroke="#252423" /><path d="M15 5h13v2H15z" fill="#3b3a39" /><circle cx="28" cy="17.500" r="6" fill="#117865" /><path d="M25.500 17.500l2 2 3-3.500" stroke="#fff" stroke-width="1.300" /></svg>
          <span>rfm</span>
        </div>
        <div v-for="f in fields" :key="f[0]" class="field">
          <i :class="{ ck: f[1] }"><svg v-if="f[1]" width="12" height="12" fill="none" stroke="#fff" stroke-width="1.200"><path d="M2.500 6l2.500 2.500 4.500-5" /></svg></i>
          <svg width="11" height="14" fill="none" stroke="#484644" stroke-width="1.100"><path v-if="f[2]" d="M10 2.500V.5H.8L6 7 .8 13.500H10v-2" /></svg>
          <span>{{ f[0] }}</span>
        </div>
      </aside>
    </main>

    <footer class="status">
      <span>Page 1 of 1</span>
      <svg width="130" height="24" fill="none" stroke="#605e5c"><path d="M1 12.500h4" stroke-width="2" /><path d="M8 12.500h100M116 12.500h6M119 9.500v6" /><path d="M61 7v11" stroke-width="3.500" /></svg>
      <b>114%</b>
      <svg width="17" height="14" fill="none" stroke="#605e5c"><path d="M.5.500h15v12H.5z" /><path d="M3 5V3h2M11 3h2v2M13 8v2h-2M5 10H3V8" /></svg>
    </footer>

    <svg class="cursor" width="20" height="30"><path d="M1 1v23l5-5 4 8 4-2-4-7h8z" fill="#fff" stroke="#111" /></svg>
  </div>
</template>

<style>
body { margin: 0; overflow: hidden; }
</style>

<style scoped>
* { box-sizing: border-box; }
.app { position: relative; width: 1920px; height: 1049px; display: flex; flex-direction: column; background: #f3f2f1; color: #252423; font-family: "Open Sans", "Noto Sans", sans-serif; font-size: 12px; letter-spacing: -0.35px; white-space: nowrap; overflow: hidden; }
svg { display: block; flex: none; overflow: visible; }
p, h2, h3 { margin: 0; }
.title { height: 34px; background: #3b3a39; color: #fff; display: flex; align-items: center; flex: none; }
.ti { width: 102px; }
.doc { width: 668px; padding-top: 6px; font-size: 12px; letter-spacing: -0.28px; }
.gsearch { width: 400px; height: 24px; background: #cfcdcb; border: 1px solid #d9d7d5; border-radius: 2px; display: flex; align-items: center; padding-left: 16px; gap: 12px; font-size: 13.5px; color: #2c5d52; }
.user { margin-left: 497px; width: 90px; }
.avatar { width: 16px; height: 16px; border-radius: 50%; background: #f3f2f1; }
.win { margin-left: 23px; }
.tabs { height: 31px; display: flex; flex: none; font-size: 14px; letter-spacing: -0.2px; }
.tab { display: flex; justify-content: center; padding-top: 6px; }
.tab b { font-weight: 400; height: 25px; line-height: 20px; }
.tab.active b { font-weight: 600; border-bottom: 3px solid #117865; letter-spacing: -0.6px; }
.tab.ctx { background: #fff; color: #0b3d34; }
.tab.ctx b { font-weight: 600; letter-spacing: -0.4px; }
.tab.ctx:last-child b { letter-spacing: -0.2px; }
.tab.ctx + .tab.ctx { margin-left: 4px; }
.ribbon { height: 95px; display: flex; flex: none; position: relative; z-index: 3; border-bottom: 1px solid #c8c6c4; box-shadow: 0 1px 4px rgba(0,0,0,.16); padding-top: 5px; background: #f3f2f1; color: #3b3a39; }
.ribbon section { height: 88px; border-right: 1px solid #c8c6c4; position: relative; display: flex; flex-direction: column; justify-content: space-between; flex: none; box-sizing: content-box; }
.ribbon label { display: block; text-align: center; font-size: 10px; line-height: 10px; color: #484644; letter-spacing: -0.15px; }
.btns { display: flex; padding-top: 5px; }
.btn { display: flex; flex-direction: column; align-items: center; flex: none; }
.btn > span { line-height: 16px; height: 16px; display: flex; align-items: center; }
.btn > svg { margin-bottom: 2px; }
.chev { margin: 1px 0 0 2px; }
.off .btn { color: #a19f9d; }
.ribbon .clip { width: 160px; display: grid; grid-template-columns: 52px 108px; grid-template-rows: 77px 11px; }
.clip label { grid-column: 1 / 3; }
.paste { display: flex; flex-direction: column; align-items: center; padding: 5px 0 0 4px; color: #a19f9d; gap: 2px; }
.small { padding-top: 0; }
.small div { height: 24px; display: flex; align-items: center; gap: 2px; letter-spacing: -0.4px; }
.collapse { position: absolute; right: 4px; bottom: 6px; }
.body { flex: 1; display: flex; min-height: 0; }
.work { width: 1558px; display: flex; flex-direction: column; flex: none; }
.upper { height: 830px; display: flex; }
.rail { width: 41px; border-right: 1px solid #e1dfdd; position: relative; }
.rail::before { content: ""; position: absolute; left: 0; top: 0; width: 3px; height: 40px; background: #117865; }
.canvas { width: 1484px; background: #fff; padding: 0 9px 6px 9px; overflow: hidden; }
.page { height: 824px; width: 1466px; border: 2px dotted #605e5c; border-top: 0; position: relative; padding-left: 10px; }
.chart { margin-top: -2px; }
.actions { margin: 1px 0 0 1335px; }
.vd { font-family: "DejaVu Sans", Verdana, sans-serif; fill: #444; letter-spacing: 0; }
.os { font-family: "Open Sans", sans-serif; fill: #444; letter-spacing: 0; }
.filters { width: 33px; background: #fff; border-left: 1px solid #b3b0ad; display: flex; flex-direction: column; gap: 2px; }
.filters span { writing-mode: vertical-rl; font-size: 15.500px; font-weight: 600; line-height: 34px; letter-spacing: -0.4px; }
.pages { height: 34px; display: flex; margin-left: 40px; border-left: 1px solid #e1dfdd; }
.pages > svg { width: 39px; }
.pg { width: 77px; background: #fff; border-left: 1px solid #a19f9d; border-right: 1px solid #c8c6c4; border-bottom: 4px solid #117865; text-align: center; line-height: 36px; font-weight: 600; letter-spacing: -0.5px; height: 35px; }
.add { width: 39px; height: 32px; margin-top: 2px; background: #117865; display: grid; place-items: center; }
.viz { width: 182px; flex: none; border-left: 1px solid #e1dfdd; border-right: 1px solid #e1dfdd; display: flex; flex-direction: column; }
.head { display: flex; justify-content: space-between; align-items: center; height: 38px; padding: 0 8px 0 8px; }
h2 { font-size: 16px; font-weight: 600; letter-spacing: -0.4px; }
h3 { font-size: 12px; font-weight: 600; padding-left: 8px; line-height: 16px; height: 18px; }
.modes { display: flex; height: 34px; padding-left: 8px; align-items: center; }
.sel { width: 32px; height: 32px; background: #d2d0ce; }
.m2 { margin: 0 40px 0 39px; }
.notch { margin-top: 2px; }
.gallery { display: grid; grid-template-columns: repeat(6, 28px); grid-auto-rows: 28px; padding: 8px 0 0 6px; }
.gallery span { display: grid; place-items: center; padding: 0 0 0 1px; }
.custom { height: 38px; margin: 4px 6px 0; border-top: 1px dashed #d8d6d4; padding: 6px 0 0 2px; }
.custom span { display: block; width: 24px; height: 24px; border: 1px solid #797775; background: #d2d0ce; }
.wells { border-top: 1px solid #d8d6d4; padding: 0 6px 0 4px; color: #3b3a39; }
.wells p { padding: 9px 0 0 8px; line-height: 18px; height: 31px; letter-spacing: -0.45px; }
.well { height: 112px; border: 1px dashed #c8c6c4; background: #fff; padding: 3px 2px; }
.pill { height: 23px; margin-bottom: 2px; border: 1px solid #c1bfbd; border-radius: 2px; background: #edebe9; display: flex; align-items: center; justify-content: space-between; padding: 0 2px 0 4px; letter-spacing: -0.45px; }
.wells p.dt { padding-top: 10px; font-weight: 600; color: #484644; height: 31px; letter-spacing: -0.35px; }
.row { display: flex; justify-content: space-between; align-items: center; padding-left: 8px; }
.r1 { height: 25px; }
.r2 { height: 28px; }
.tg { width: 32px; height: 16px; border: 1px solid #797775; border-radius: 8px; background: #fff; color: #605e5c; font-style: normal; font-size: 9.5px; display: flex; align-items: center; justify-content: center; gap: 2px; }
.tg i { width: 8px; height: 8px; border-radius: 50%; background: #605e5c; }
.tg.on { background: #605e5c; border-color: #605e5c; color: #fff; font-weight: 600; }
.tg.on i { background: #fff; }
.drop { margin-top: 4px; height: 26px; border: 1px dashed #c8c6c4; background: #fff; text-align: center; line-height: 25px; letter-spacing: -0.22px; }
.data { width: 180px; flex: none; }
.data .head { padding-right: 8px; }
.dsearch { margin: 7px 4px 0; height: 27px; border: 1px solid #605e5c; border-radius: 2px; background: #fff; display: flex; align-items: center; gap: 6px; padding-left: 8px; font-size: 13.5px; color: #484644; letter-spacing: -0.4px; }
.tbl { display: flex; align-items: center; margin: 9px 0 0 7px; height: 24px; color: #484644; }
.field { display: flex; align-items: center; height: 24px; padding-left: 38px; gap: 9px; color: #484644; }
.field i { width: 12px; height: 12px; border: 1px solid #797775; border-radius: 2px; background: #fff; }
.field i.ck { background: #117865; border: 0; }
.field > svg { margin-left: -1px; }
.field span { margin-left: -2px; letter-spacing: -0.4px; }
.status { height: 24px; border-top: 1px solid #e1dfdd; display: flex; align-items: center; padding-left: 5px; flex: none; color: #484644; letter-spacing: -0.2px; }
.status > svg:nth-child(2) { margin-left: auto; }
.status b { font-weight: 400; width: 45px; margin-left: 7px; color: #605e5c; letter-spacing: -0.4px; }
.status > svg:last-child { margin-right: 22px; }
.cursor { position: absolute; left: 1510px; top: 13px; z-index: 9; }
</style>
